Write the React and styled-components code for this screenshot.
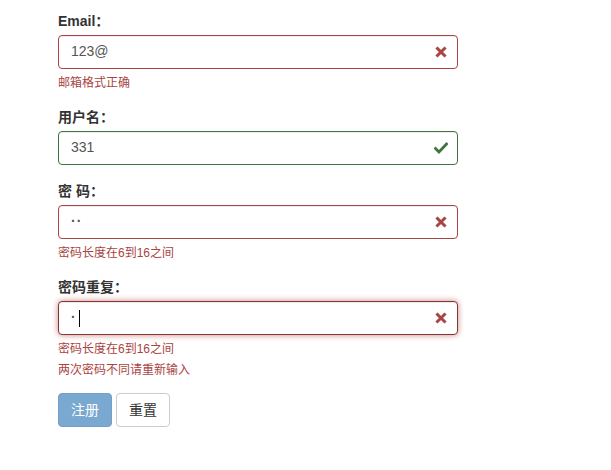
import React from 'react'
import styled, { createGlobalStyle } from 'styled-components'

const GlobalStyle = createGlobalStyle`
body{
    margin:0;
    background:#fff;
    font-family:"Liberation Sans", "Noto Sans CJK SC", sans-serif;
    font-size:14px;
    line-height:1.42857;
    color:#333;
}
`

const FormWrapper = styled.form`
width:400px;
padding:10px 0 0 58px;
`

const FormGroup = styled.div`
position:relative;
margin-bottom:15px;
`

const Label = styled.div`
font-weight:700;
height:20px;
line-height:23px;
margin-bottom:5px;
`

const colors = {
    error: { border: '#a94442', focus: '#843534', glow: '#ce8483', icon: '#a94442' },
    success: { border: '#3c763d', focus: '#2b542c', glow: '#67b168', icon: '#3c763d' },
}

const Field = styled.div`
box-sizing:border-box;
height:34px;
width:100%;
padding:6px 12px;
display:flex;
align-items:center;
font-size:14px;
color:#555;
background:#fff;
border:1px solid ${p => (p.$focus ? colors[p.$state].focus : colors[p.$state].border)};
border-radius:4px;
box-shadow:inset 0 1px 1px rgba(0,0,0,.075)${p => (p.$focus ? `, 0 0 6px ${colors[p.$state].glow}` : '')};
`

const Dots = styled.span`
font-size:14px;
font-weight:700;
letter-spacing:1px;
color:#555;
`

const Caret = styled.span`
display:inline-block;
width:1px;
height:17px;
margin-left:2px;
background:#000;
`

const Feedback = styled.span`
position:absolute;
right:0;
bottom:0;
width:34px;
height:34px;
display:flex;
align-items:center;
justify-content:center;
`

const Help = styled.div`
margin-top:5px;
padding-top:1px;
margin-bottom:-1px;
font-size:12px;
line-height:17px;
color:#a94442;
& + &{
    margin-top:4px;
}
`

const Buttons = styled.div`
display:flex;
gap:4px;
`

const Button = styled.button`
box-sizing:border-box;
height:34px;
padding:6px 12px;
font-family:inherit;
font-size:14px;
line-height:20px;
border-radius:4px;
border:1px solid ${p => (p.$primary ? '#2e6da4' : '#ccc')};
background:${p => (p.$primary ? '#337ab7' : '#fff')};
color:${p => (p.$primary ? '#fff' : '#333')};
opacity:${p => (p.$primary ? 0.65 : 1)};
`

const RemoveIcon = ({ color }) => (
    <svg width="12" height="12" viewBox="0 0 12 12">
        <path d="M2.5 2.5 L9.5 9.5 M9.5 2.5 L2.5 9.5" stroke={color} strokeWidth="3" strokeLinecap="square" />
    </svg>
)

const OkIcon = ({ color }) => (
    <svg width="14" height="12" viewBox="0 0 14 12">
        <path d="M1.5 6.5 L5 10 L12.5 2" stroke={color} strokeWidth="2.8" fill="none" strokeLinecap="square" />
    </svg>
)

const Group = ({ label, state, focus, children, helps = [] }) => (
    <FormGroup>
        <Label>{label}</Label>
        <div style={{ position: 'relative' }}>
            <Field $state={state} $focus={focus}>{children}</Field>
            <Feedback>
                {state === 'error' ? <RemoveIcon color={colors.error.icon} /> : <OkIcon color={colors.success.icon} />}
            </Feedback>
        </div>
        {helps.map(h => <Help key={h}>{h}</Help>)}
    </FormGroup>
)

const App = () => {
    return (
        <>
            <GlobalStyle />
            <FormWrapper onSubmit={e => e.preventDefault()}>
                <Group label="Email：" state="error" helps={['邮箱格式正确']}>123@</Group>
                <Group label="用户名：" state="success">331</Group>
                <Group label="密 码：" state="error" helps={['密码长度在6到16之间']}>
                    <Dots>··</Dots>
                </Group>
                <Group label="密码重复：" state="error" focus helps={['密码长度在6到16之间', '两次密码不同请重新输入']}>
                    <Dots>·</Dots><Caret />
                </Group>
                <Buttons>
                    <Button $primary type="button">注册</Button>
                    <Button type="button">重置</Button>
                </Buttons>
            </FormWrapper>
        </>
    )
}

export default App
